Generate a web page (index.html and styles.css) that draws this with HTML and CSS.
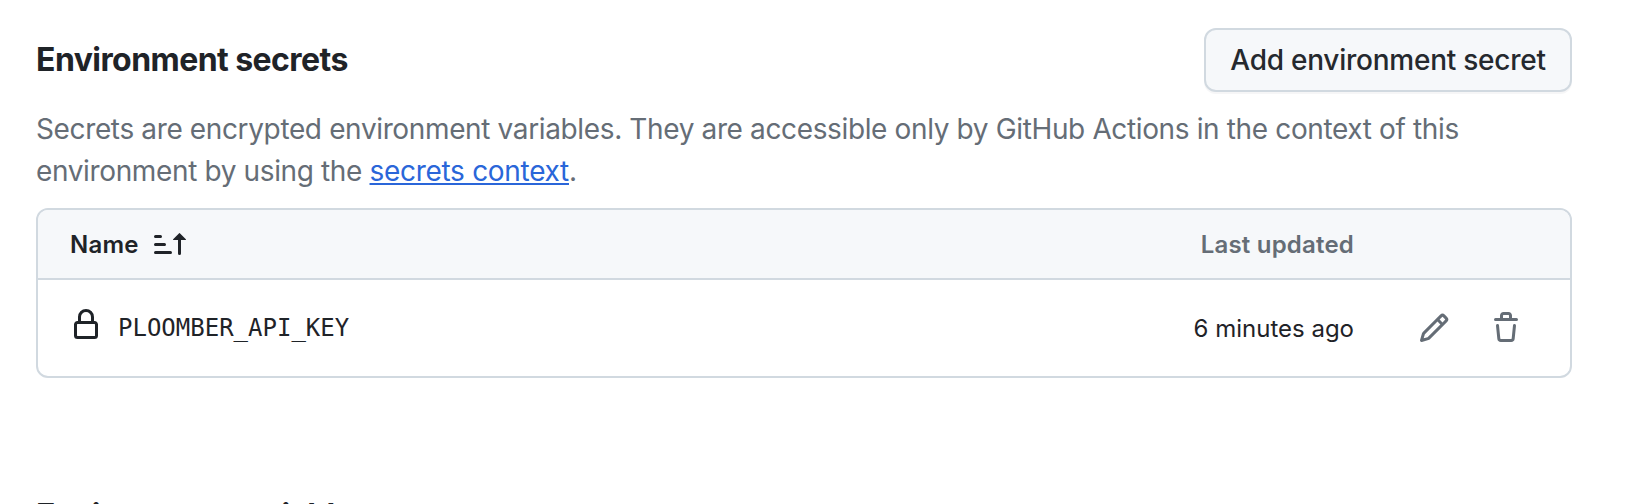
FILE: index.html
```html
<!DOCTYPE html>
<html lang="en">
<head>
<meta charset="utf-8">
<title>Environment secrets</title>
<link rel="stylesheet" href="styles.css">
</head>
<body>
<main class="page">
  <header class="section-header">
    <h2 class="heading">Environment secrets</h2>
    <button class="button" type="button">Add environment secret</button>
  </header>
  <p class="description">Secrets are encrypted environment variables. They are accessible only by GitHub Actions in the context of this<br>environment by using the <a class="link" href="#">secrets context</a>.</p>
  <section class="table">
    <div class="table-head">
      <span class="column-name">Name</span>
      <svg class="icon" viewBox="0 0 16 16"><path d="m12.927 2.573 3 3A.25.25 0 0 1 15.75 6H13.5v6.75a.75.75 0 0 1-1.5 0V6H9.75a.25.25 0 0 1-.177-.427l3-3a.25.25 0 0 1 .354 0ZM0 12.25a.75.75 0 0 1 .75-.75h7.5a.75.75 0 0 1 0 1.5H.75a.75.75 0 0 1-.75-.75Zm0-4a.75.75 0 0 1 .75-.75h4.5a.75.75 0 0 1 0 1.5H.75A.75.75 0 0 1 0 8.25Zm0-4a.75.75 0 0 1 .75-.75h2.5a.75.75 0 0 1 0 1.5H.75A.75.75 0 0 1 0 4.25Z"/></svg>
      <span class="column-updated">Last updated</span>
    </div>
    <div class="table-row">
      <svg class="icon lock" viewBox="0 0 16 16"><path d="M4 4a4 4 0 0 1 8 0v2h.25c.966 0 1.75.784 1.75 1.75v5.5A1.75 1.75 0 0 1 12.25 15h-8.5A1.75 1.75 0 0 1 2 13.25v-5.5C2 6.784 2.784 6 3.75 6H4Zm8.25 3.5h-8.5a.25.25 0 0 0-.25.25v5.5c0 .138.112.25.25.25h8.5a.25.25 0 0 0 .25-.25v-5.5a.25.25 0 0 0-.25-.25ZM10.5 6V4a2.5 2.5 0 1 0-5 0v2Z"/></svg>
      <code class="secret-name">PLOOMBER_API_KEY</code>
      <span class="updated">6 minutes ago</span>
      <div class="actions">
        <svg class="icon" viewBox="0 0 16 16"><path d="M11.013 1.427a1.75 1.75 0 0 1 2.474 0l1.086 1.086a1.75 1.75 0 0 1 0 2.474l-8.61 8.61c-.21.21-.47.364-.756.445l-3.251.93a.75.75 0 0 1-.927-.928l.929-3.25c.081-.286.235-.547.445-.758l8.61-8.61Zm.176 4.823L9.75 4.81l-6.286 6.287a.253.253 0 0 0-.064.108l-.558 1.953 1.953-.558a.253.253 0 0 0 .108-.064Zm1.238-3.763a.25.25 0 0 0-.354 0L10.811 3.75l1.439 1.44 1.263-1.263a.25.25 0 0 0 0-.354Z"/></svg>
        <svg class="icon" viewBox="0 0 16 16"><path d="M11 1.75V3h2.25a.75.75 0 0 1 0 1.5H2.75a.75.75 0 0 1 0-1.5H5V1.75C5 .784 5.784 0 6.75 0h2.5C10.216 0 11 .784 11 1.75ZM4.496 6.675l.66 6.6a.25.25 0 0 0 .249.225h5.19a.25.25 0 0 0 .249-.225l.66-6.6a.75.75 0 0 1 1.492.149l-.66 6.6A1.748 1.748 0 0 1 10.595 15h-5.19a1.75 1.75 0 0 1-1.741-1.575l-.66-6.6a.75.75 0 1 1 1.492-.15ZM6.5 1.75V3h3V1.75a.25.25 0 0 0-.25-.25h-2.5a.25.25 0 0 0-.25.25Z"/></svg>
      </div>
    </div>
  </section>
  <h2 class="heading heading-next">Environment variables</h2>
</main>
</body>
</html>
```
FILE: styles.css
```css
* { box-sizing: border-box; }
body {
  margin: 0;
  height: 504px;
  overflow: hidden;
  background: #fff;
  color: #1f2328;
  font-family: Inter, "Liberation Sans", sans-serif;
}
.page { padding: 28px 60px 0 36px; }
.section-header {
  display: flex;
  align-items: center;
  justify-content: space-between;
  height: 64px;
}
.heading {
  margin: 0;
  font-size: 32px;
  line-height: 48px;
  font-weight: 650;
  letter-spacing: -0.56px;
  white-space: nowrap;
}
.button {
  width: 368px;
  height: 64px;
  padding: 0;
  border: 2px solid #d1d9e0;
  border-radius: 12px;
  background: #f6f8fa;
  box-shadow: 0 2px 0 rgba(31, 35, 40, 0.04);
  color: #25292e;
  font-family: inherit;
  font-size: 28px;
  font-weight: 500;
  letter-spacing: -0.25px;
  white-space: nowrap;
}
.description {
  margin: 16px 0 0;
  color: #656d76;
  font-size: 28px;
  line-height: 42px;
  letter-spacing: -0.365px;
  white-space: nowrap;
}
.link {
  color: #2a66d9;
  letter-spacing: -0.3px;
  text-decoration: underline;
  text-decoration-thickness: 2px;
  text-underline-offset: 2px;
  text-decoration-skip-ink: none;
}
.table {
  height: 170px;
  margin-top: 16px;
  border: 2px solid #d1d9e0;
  border-radius: 12px;
  overflow: hidden;
  font-size: 24px;
}
.table-head {
  display: flex;
  align-items: center;
  height: 70px;
  padding: 0 216px 0 32px;
  border-bottom: 2px solid #d1d9e0;
  background: #f6f8fa;
  font-weight: 600;
  letter-spacing: 0.2px;
}
.column-name { width: 84px; }
.column-updated { margin-left: auto; color: #656d76; font-weight: 640; }
.table-row {
  display: flex;
  align-items: center;
  height: 96px;
  padding: 0 48px 0 32px;
}
.icon {
  display: block;
  flex: none;
  width: 32px;
  height: 32px;
  fill: currentColor;
}
.lock { margin: -6px 16px 0 0; }
.secret-name { font-family: "DejaVu Sans Mono", monospace; font-size: 24px; }
.updated { margin-left: auto; }
.actions {
  display: flex;
  gap: 40px;
  margin-left: 64px;
  color: #656d76;
}
.heading-next { margin-top: 114px; letter-spacing: -0.75px; }
```
